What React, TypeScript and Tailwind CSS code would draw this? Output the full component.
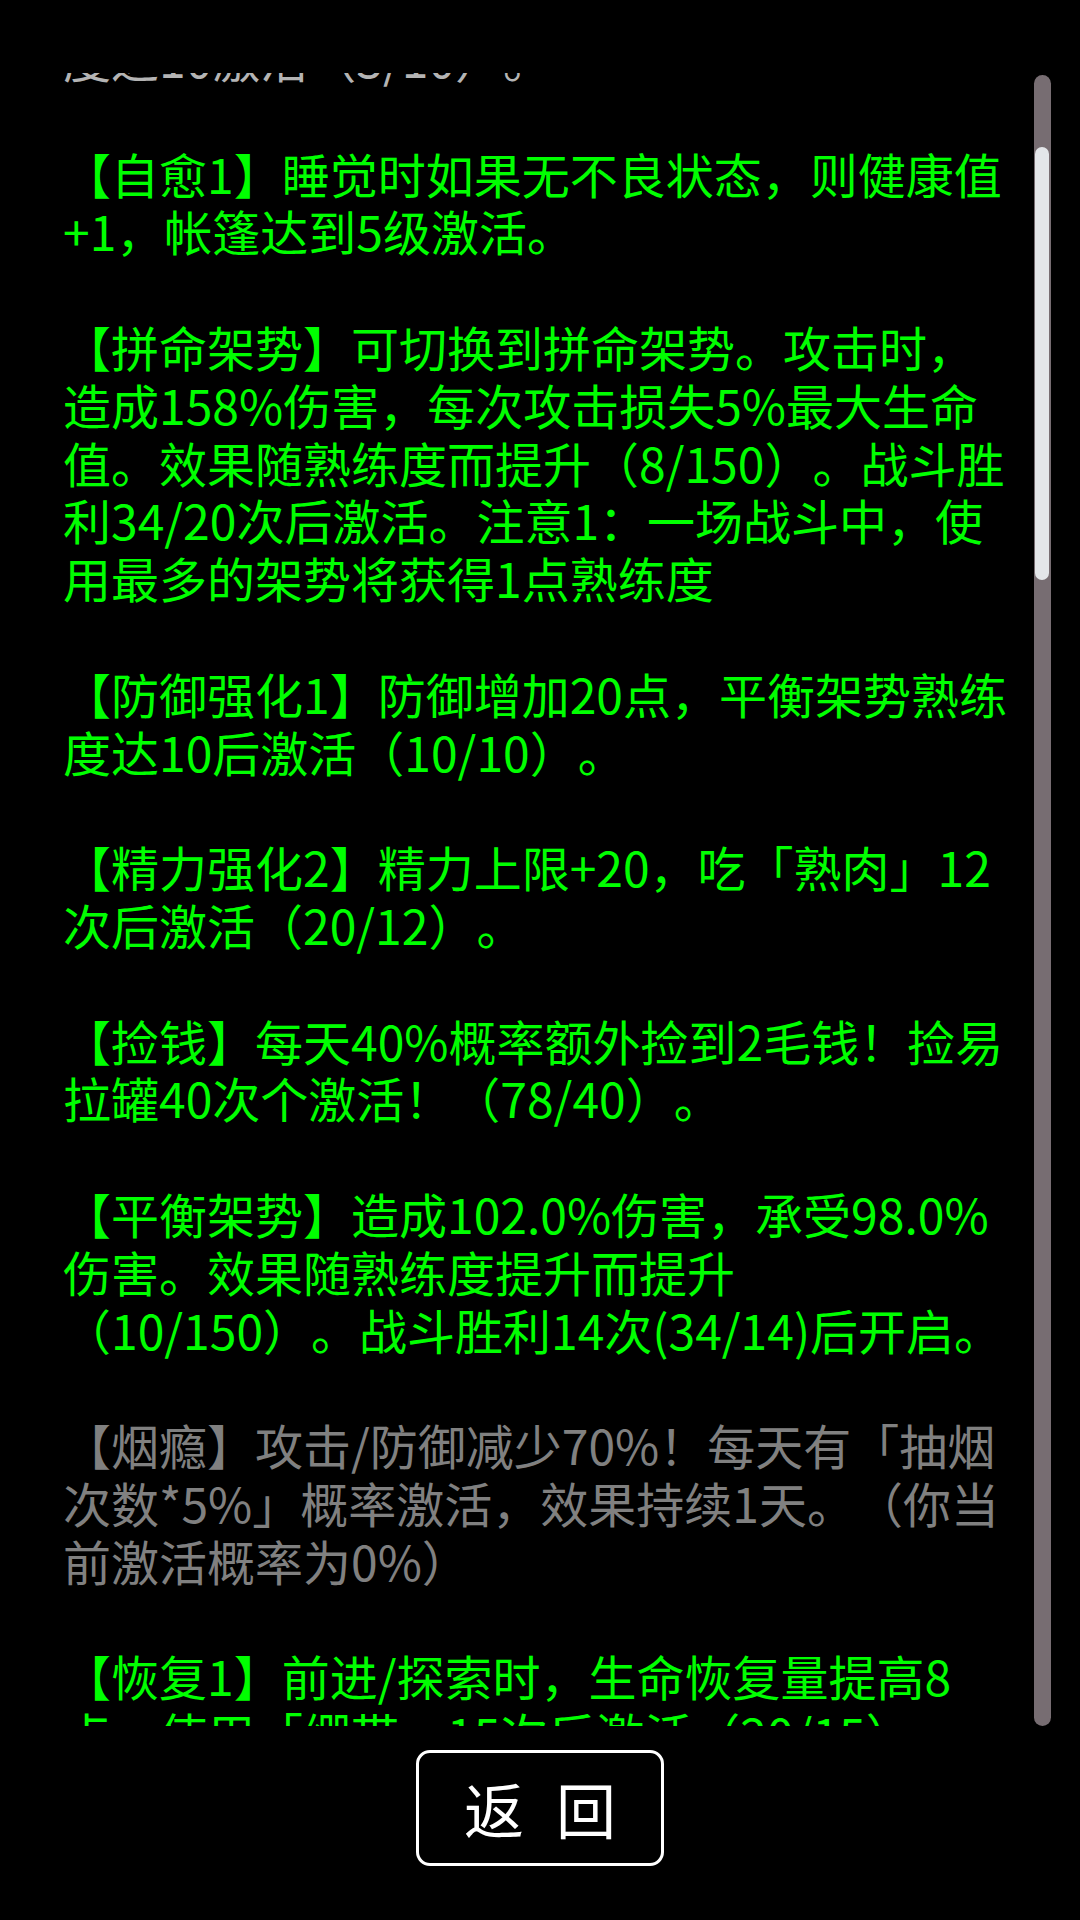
import React from 'react'

type Entry = { tone: 'on' | 'off' | 'dim'; lines: string[] }

const entries: Entry[] = [
    { tone: 'dim', lines: ['度达10激活（3/10）。'] },
    { tone: 'on', lines: ['【自愈1】睡觉时如果无不良状态，则健康值', '+1，帐篷达到5级激活。'] },
    {
        tone: 'on',
        lines: [
            '【拼命架势】可切换到拼命架势。攻击时，',
            '造成158%伤害，每次攻击损失5%最大生命',
            '值。效果随熟练度而提升（8/150）。战斗胜',
            '利34/20次后激活。注意1：一场战斗中，使',
            '用最多的架势将获得1点熟练度',
        ],
    },
    { tone: 'on', lines: ['【防御强化1】防御增加20点，平衡架势熟练', '度达10后激活（10/10）。'] },
    { tone: 'on', lines: ['【精力强化2】精力上限+20，吃「熟肉」12', '次后激活（20/12）。'] },
    { tone: 'on', lines: ['【捡钱】每天40%概率额外捡到2毛钱！捡易', '拉罐40次个激活！（78/40）。'] },
    {
        tone: 'on',
        lines: [
            '【平衡架势】造成102.0%伤害，承受98.0%',
            '伤害。效果随熟练度提升而提升',
            '（10/150）。战斗胜利14次(34/14)后开启。',
        ],
    },
    {
        tone: 'off',
        lines: ['【烟瘾】攻击/防御减少70%！每天有「抽烟', '次数*5%」概率激活，效果持续1天。（你当', '前激活概率为0%）'],
    },
    { tone: 'on', lines: ['【恢复1】前进/探索时，生命恢复量提高8', '点，使用「绷带」15次后激活（20/15）。'] },
]

const toneClass = {
    on: 'text-[#00ff00]',
    off: 'text-[#808080]',
    dim: 'text-[#b4b4b4]',
}

const App = () => {
    return (
        <div className="w-[1080px] h-[1920px] bg-black flex flex-col overflow-hidden font-['Noto_Sans_CJK_SC',sans-serif]">
            <div className="relative mt-[73px] h-[1653px] overflow-hidden">
                <div className="pl-[63px] mt-[-44px] text-[48px] leading-[57.8px] whitespace-nowrap [text-spacing-trim:space-all] flex flex-col gap-[57.8px]">
                    {entries.map((e, i) => (
                        <div key={i} className={toneClass[e.tone]}>
                            {e.lines.map((l, j) => (
                                <div key={j}>{l}</div>
                            ))}
                        </div>
                    ))}
                </div>

                {/* scrollbar */}
                <div className="absolute right-[29px] top-[2px] w-[17px] h-[1651px] rounded-full bg-[#776d72]">
                    <div className="absolute left-[1px] right-[2px] top-[72px] h-[433px] rounded-full bg-[#e3e6e9]" />
                </div>
            </div>

            <div className="flex-1 flex justify-center pt-[24px]">
                <button className="w-[248px] h-[116px] border-[3px] border-white rounded-[14px] flex items-center justify-center gap-[32px] text-white text-[60px] leading-none">
                    <span>返</span>
                    <span>回</span>
                </button>
            </div>
        </div>
    )
}

export default App
